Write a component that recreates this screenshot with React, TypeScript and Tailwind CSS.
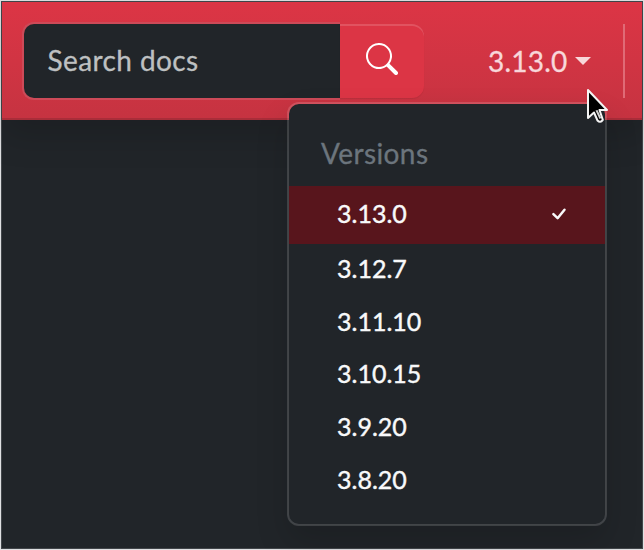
const versions = ["3.13.0", "3.12.7", "3.11.10", "3.10.15", "3.9.20", "3.8.20"];

function SearchIcon() {
  return (
    <svg className="mb-1 h-8 w-8" viewBox="0 0 16 16" fill="white">
      <path d="M11.742 10.344a6.5 6.5 0 1 0-1.397 1.398h-.001q.044.06.098.115l3.85 3.85a1 1 0 0 0 1.415-1.414l-3.85-3.85a1 1 0 0 0-.115-.1zM12 6.5a5.5 5.5 0 1 1-11 0 5.5 5.5 0 0 1 11 0" />
    </svg>
  );
}

function VersionMenu() {
  return (
    <div className="absolute left-[287px] top-[102px] h-[424px] w-[320px] rounded-xl border-2 border-white/15 bg-[#212529] bg-clip-padding pt-4 shadow-[0_16px_32px_rgba(0,0,0,0.15)]">
      <h6 className="h-[66px] pl-8 text-[28px] leading-[66px] tracking-[0.4px] text-[#6c757d] [-webkit-text-stroke:0.3px_#6c757d]">Versions</h6>
      <ul>
        {versions.map((version, index) => (
          <li
            key={version}
            className={
              index === 0
                ? "flex h-[58px] items-center justify-between bg-[#58151c] pl-12 pr-[38px]"
                : "flex h-[52.7px] items-center pl-12"
            }
          >
            <span className="pb-[4.5px] text-[25px] font-normal leading-9 text-[#f8f9fa] [-webkit-text-stroke:0.4px_#f8f9fa]">{version}</span>
            {index === 0 && (
              <svg className="mb-0.5 h-3 w-4" viewBox="0 0 16 12" fill="none" stroke="#f8f9fa" strokeWidth="2.5" strokeLinecap="round" strokeLinejoin="round">
                <path d="M2.4 6.2 6.6 10.2 13.5 1.8" />
              </svg>
            )}
          </li>
        ))}
      </ul>
    </div>
  );
}

export default function App() {
  return (
    <div className="relative h-[550px] w-[644px] overflow-hidden bg-[#dfe0e2] p-px font-[Lato,sans-serif]">
      <div className="h-full border border-[#42464a] bg-[#212529]">
        <header className="flex h-[118px] w-full border-b-2 border-[#a92d39] bg-linear-to-b from-[#dc3545] to-[#c63341] pl-5 pt-5 shadow-[0_16px_32px_rgba(0,0,0,0.15)]">
          <div className="h-[78px] w-[318px] rounded-l-xl border-2 border-r-0 border-[#cd4a58] bg-[#212529] pl-[23.5px] text-[28px] leading-[73px] tracking-[0.4px] text-[#bec0c1] [-webkit-text-stroke:0.3px_#bec0c1]">
            Search docs
          </div>
          <button className="mt-0.5 flex h-[74px] w-[84px] items-center justify-center rounded-r-xl bg-[#dc3545] shadow-[inset_0_2px_0_rgba(255,255,255,0.15),0_1px_1px_rgba(0,0,0,0.075)]">
            <SearchIcon />
          </button>
          <div className="ml-16 mt-0.5 flex h-[74px] w-[137px] items-center border-r-2 border-[#e06a76] text-[28px] text-[#f8d7da]">
            <span className="tracking-[0.2px] [-webkit-text-stroke:0.3px_#f8d7da]">3.13.0</span>
            <svg className="ml-2 h-2 w-4" viewBox="0 0 16 8" fill="#f8d7da">
              <path d="M0 0h16L8 8z" />
            </svg>
          </div>
        </header>
      </div>
      <VersionMenu />
      <svg className="absolute left-[585px] top-[87px] h-9 w-6" viewBox="0 0 24 36" fill="black" stroke="#f4f4f4" strokeWidth="2" strokeLinejoin="round">
        <path d="M3 3v28l6-5.5 3.5 8q2.8 3 5.3-.6L14.5 23H22z" />
        <path d="m10.5 23.5 4 8.5 1.8-.9-3.8-8.2" fill="#d2d2d2" stroke="none" />
      </svg>
    </div>
  );
}
